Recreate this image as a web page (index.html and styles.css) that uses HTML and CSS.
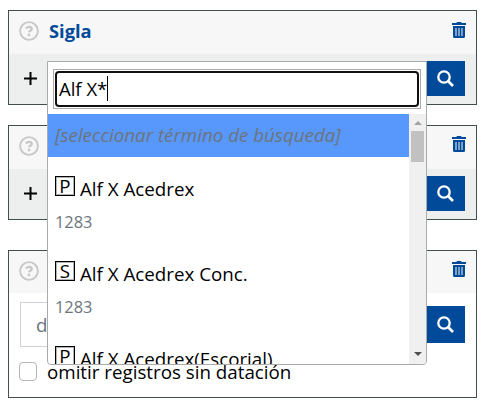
FILE: index.html
```
<!DOCTYPE html>
<html lang="es">
<head>
<meta charset="utf-8">
<title>Búsqueda</title>
<link rel="stylesheet" href="styles.css">
</head>
<body>
<svg class="defs" width="0" height="0">
  <symbol id="help" viewBox="0 0 20 20"><circle cx="10" cy="10" r="8.9" fill="none" stroke="currentColor" stroke-width="1.9"/><path d="M7.1 7.700C7.600 6.300 8.600 5.800 10 5.800c1.600 0 2.700.8 2.700 2.100 0 1.900-2.600 1.900-2.600 3.400" fill="none" stroke="currentColor" stroke-width="2.300"/><circle cx="10" cy="14" r="1.400" fill="currentColor"/></symbol>
  <symbol id="trash" viewBox="0 0 14 16"><path fill="currentColor" fill-rule="evenodd" d="M0 1h4.300L5 0h4l.7 1H14v2H0zM1 4h12v10.500A1.500 1.500 0 0 1 11.500 16h-9A1.500 1.500 0 0 1 1 14.500zM3.500 6v8h1V6zM6.500 6v8h1V6zM9.500 6v8h1V6z"/></symbol>
  <symbol id="search" viewBox="0 0 17 17"><circle cx="7" cy="7" r="5.700" fill="none" stroke="currentColor" stroke-width="2.300"/><path d="M11 11l5 5" stroke="currentColor" stroke-width="2.700"/></symbol>
</svg>
<main class="filters">
  <section class="card">
    <header class="card-head"><svg class="help"><use href="#help"/></svg><h2>Sigla</h2><svg class="trash"><use href="#trash"/></svg></header>
    <div class="card-body"><svg class="plus" viewBox="0 0 13 13"><path d="M6.500 0v13M0 6.500h13"/></svg><button class="go"><svg><use href="#search"/></svg></button></div>
  </section>
  <section class="card">
    <header class="card-head low"><svg class="help"><use href="#help"/></svg><svg class="trash"><use href="#trash"/></svg></header>
    <div class="card-body"><svg class="plus" viewBox="0 0 13 13"><path d="M6.500 0v13M0 6.500h13"/></svg><button class="go"><svg><use href="#search"/></svg></button></div>
  </section>
  <section class="card dates">
    <header class="card-head low"><svg class="help"><use href="#help"/></svg><svg class="trash"><use href="#trash"/></svg></header>
    <div class="date-row"><div class="date">d</div><button class="go tall"><svg><use href="#search"/></svg></button></div>
    <label class="omit"><span class="check"></span><span>omitir registros sin datación</span></label>
  </section>
</main>
<div class="dropdown">
  <div class="search"><div class="field">Alf X*<span class="caret"></span></div></div>
  <div class="results">
    <ul>
      <li class="active">[seleccionar término de búsqueda]</li>
      <li><div class="name"><span class="tag">P</span>Alf X Acedrex</div><div class="year">1283</div></li>
      <li><div class="name"><span class="tag">S</span>Alf X Acedrex Conc.</div><div class="year">1283</div></li>
      <li><div class="name"><span class="tag">P</span>Alf X Acedrex(Escorial)</div><div class="year">1283</div></li>
    </ul>
    <div class="scrollbar"><svg class="up" viewBox="0 0 8 4"><path d="M0 4l4-4 4 4z"/></svg><div class="thumb"></div><svg class="down" viewBox="0 0 8 4"><path d="M0 0h8L4 4z"/></svg></div>
  </div>
</div>
</body>
</html>
```
FILE: styles.css
```
* { box-sizing: border-box; }
body {
  margin: 0;
  height: 408px;
  overflow: hidden;
  background: #fff;
  color: #000;
  font: 18.750px/27px "Open Sans", "Noto Sans", sans-serif;
}
.defs { position: absolute; }
.filters { padding: 10px 8px 0; }
.card {
  height: 95px;
  margin-bottom: 20px;
  border: 1px solid #41504f;
  background: #edefee;
}
.card-head {
  display: flex;
  align-items: center;
  height: 43px;
  padding: 0 10px 3px 10px;
  background: #f7f7f7;
}
.card-head.low { padding-bottom: 4px; }
.card-head h2 {
  margin: 0 0 2px 10px;
  color: #004a99;
  font-size: 18.300px;
  line-height: 27px;
}
.help { width: 20px; height: 20px; color: #c8c8c8; }
.trash { width: 14px; height: 16px; margin: 0 0 2px auto; color: #004a99; }
.low .trash { margin-bottom: 4px; }
.card-body { display: flex; justify-content: space-between; padding: 7px 11px 0 15px; }
.plus { width: 13px; height: 13px; margin-top: 11px; }
.plus path { stroke: #000; stroke-width: 2; }
.go {
  display: flex;
  align-items: center;
  justify-content: center;
  width: 39px;
  height: 35px;
  margin: 0;
  padding: 0;
  border: 0;
  background: #004a99;
  color: #fff;
}
.go svg { width: 17px; height: 17px; }
.go.tall { height: 37px; }
.dates { height: 148px; margin: 30px 0 0; background: #fff; }
.dates .card-head { height: 42px; padding-bottom: 3px; }
.date-row { display: flex; justify-content: space-between; align-items: flex-start; padding: 9px 11px 0; }
.date-row .go { margin-top: 4px; }
.date {
  width: 390px;
  height: 45px;
  padding: 8px 15px;
  border: 1px solid #ced4da;
  color: #6c757d;
}
.omit { display: flex; align-items: center; gap: 10px; margin: 11px 0 0 10px; }
.check { width: 18px; height: 19px; border: 1px solid #b5b5b5; border-radius: 4px; }
.dropdown {
  position: absolute;
  top: 61px;
  left: 47px;
  width: 380px;
  height: 304px;
  overflow: hidden;
  border: 1px solid #aaa;
  border-radius: 0 0 4px 4px;
  background: #fff;
}
.search { margin: 7px 5px 5px; height: 40px; padding: 1px; border: 1px solid #aaa; }
.field {
  display: flex;
  align-items: center;
  height: 36px;
  padding: 0 0 2px 2px;
  border: 2px solid #101010;
  border-radius: 4px;
  font-size: 18.500px;
}
.caret { width: 1px; height: 25px; background: #000; }
.results { display: flex; height: 250px; }
ul { flex: 1; margin: 0; padding: 0; list-style: none; overflow: hidden; }
li { height: 85px; padding: 18px 7px 0; }
li.active {
  height: 43px;
  padding-top: 7px;
  background: #5897fb;
  color: #6c757d;
  font-style: italic;
}
.name { display: flex; height: 27px; line-height: 28px; }
.tag {
  width: 20px;
  height: 20px;
  margin: 1px 5px 0 0;
  border: 1px solid #000;
  box-shadow: inset 0 0 0 1px rgba(0, 0, 0, .3);
  text-align: center;
  line-height: 18px;
}
.year { margin-top: 7px; color: #6c757d; font-size: 16.400px; line-height: 25px; }
.scrollbar {
  display: flex;
  flex-direction: column;
  align-items: center;
  width: 17px;
  padding: 7px 0 8px;
  background: #f0f0f0;
}
.scrollbar svg { width: 8px; height: 4px; fill: #a3a3a3; }
.scrollbar .down { margin-top: auto; fill: #505050; }
.thumb { width: 13px; height: 31px; margin-top: 6px; background: #c1c1c1; }
```
